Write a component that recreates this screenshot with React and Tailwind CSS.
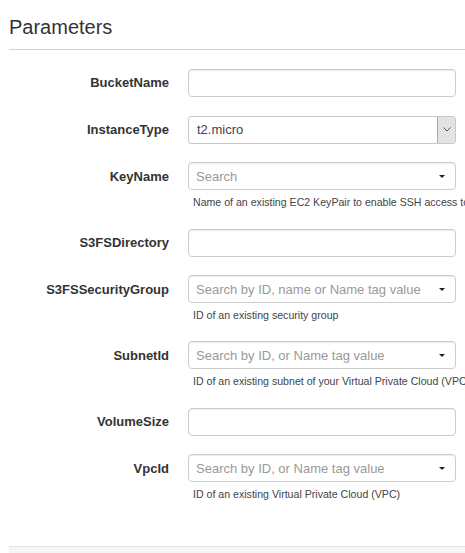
import React from "react";

const rows = [
  { label: "BucketName", type: "text" },
  { label: "InstanceType", type: "select", value: "t2.micro" },
  {
    label: "KeyName",
    type: "search",
    placeholder: "Search",
    help: "Name of an existing EC2 KeyPair to enable SSH access to the instance",
  },
  { label: "S3FSDirectory", type: "text" },
  {
    label: "S3FSSecurityGroup",
    type: "search",
    placeholder: "Search by ID, name or Name tag value",
    help: "ID of an existing security group",
  },
  {
    label: "SubnetId",
    type: "search",
    placeholder: "Search by ID, or Name tag value",
    help: "ID of an existing subnet of your Virtual Private Cloud (VPC)",
  },
  { label: "VolumeSize", type: "text" },
  {
    label: "VpcId",
    type: "search",
    placeholder: "Search by ID, or Name tag value",
    help: "ID of an existing Virtual Private Cloud (VPC)",
  },
];

function Field({ row }) {
  if (row.type === "text") {
    return (
      <div className="h-[28px] rounded-[4px] border border-[#cccccc] bg-white shadow-[inset_0_1px_1px_rgba(0,0,0,0.075)]" />
    );
  }
  if (row.type === "select") {
    return (
      <div className="flex h-[28px] items-stretch rounded-[3px] border border-[#c8c8c8] bg-white">
        <div className="flex flex-1 items-center pl-[8px] text-[13px] text-[#444]">
          {row.value}
        </div>
        <div className="flex w-[18px] items-center justify-center border-l border-[#a9a9a9] bg-[#e3e3e3]">
          <svg width="8" height="5" viewBox="0 0 8 5">
            <polyline points="0.5,0.5 4,4 7.5,0.5" fill="none" stroke="#555" strokeWidth="1" />
          </svg>
        </div>
      </div>
    );
  }
  return (
    <div className="flex h-[28px] items-center rounded-[4px] border border-[#cccccc] bg-white pl-[7px] pr-[10px] shadow-[inset_0_1px_1px_rgba(0,0,0,0.075)]">
      <span className="flex-1 whitespace-nowrap text-[13px] text-[#999999]">{row.placeholder}</span>
      <svg width="6" height="3" viewBox="0 0 6 3">
        <polygon points="0,0 6,0 3,3" fill="#222" />
      </svg>
    </div>
  );
}

export default function App() {
  return (
    <div
      className="h-[553px] w-[465px] overflow-hidden bg-white pl-[9px] text-[#333]"
      style={{ fontFamily: '"Liberation Sans", Arial, sans-serif' }}
    >
      <div className="border-b border-[#d2d2d2] pb-[11px] pt-[16px]">
        <h2 className="text-[20px] leading-[22px] text-[#333]">Parameters</h2>
      </div>
      <div className="pr-[9px] pb-[25.4px] pt-[19px]">
        {rows.map((row) => (
          <div key={row.label} className="mb-[18.7px] flex items-start">
            <div className="flex h-[28px] w-[160px] shrink-0 items-center justify-end whitespace-nowrap text-[13px] font-bold text-[#333]">
              {row.label}
            </div>
            <div className="ml-[19px] min-w-0 flex-1">
              <Field row={row} />
              {row.help && (
                <div className="mr-[-9px] mt-[4.5px] overflow-hidden whitespace-nowrap pl-[5px] text-[10.6px] leading-[15px] text-[#444]">
                  {row.help}
                </div>
              )}
            </div>
          </div>
        ))}
      </div>
      <div className="h-[30px] border-t border-[#e3e3e3] bg-[#f5f5f5]" />
    </div>
  );
}
